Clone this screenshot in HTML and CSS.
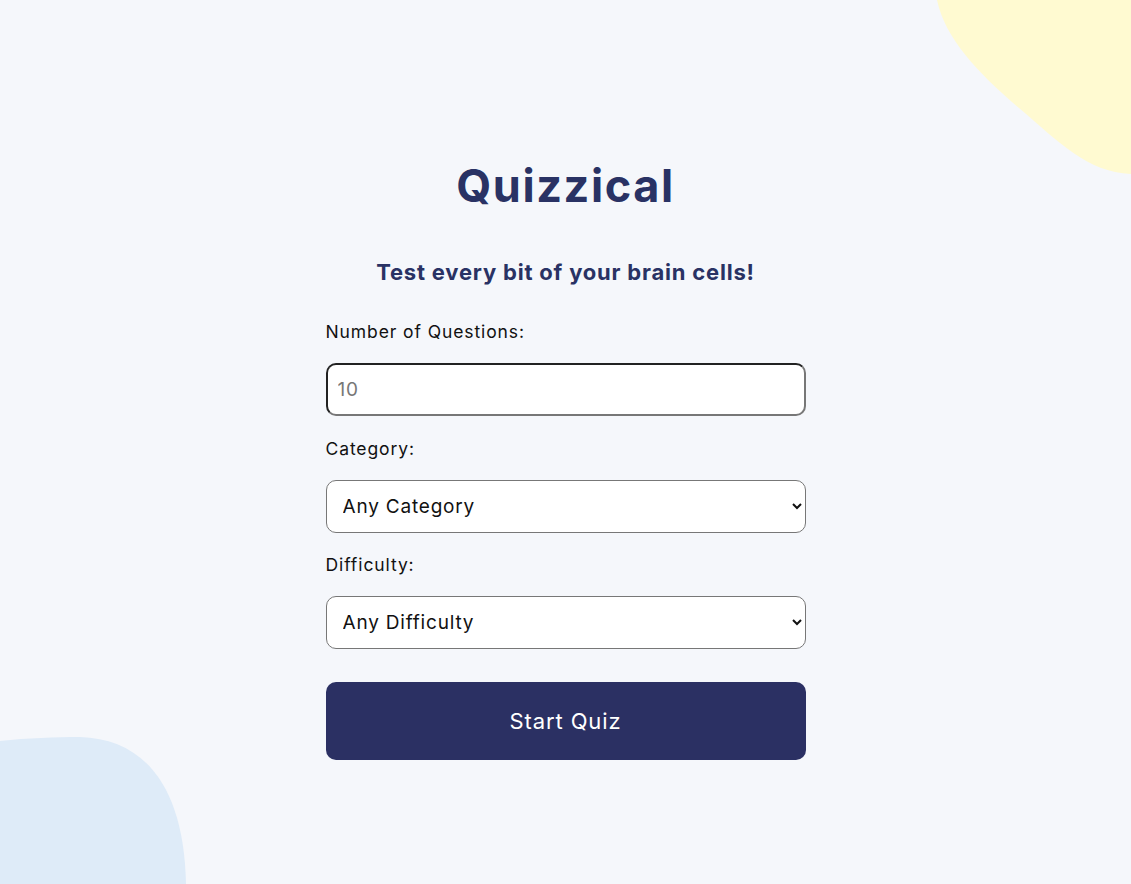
FILE: index.html
```html
<!DOCTYPE html>
<html lang="en">
<head>
    <meta charset="UTF-8">
    <meta name="viewport" content="width=device-width, initial-scale=1.0">
    <title>Quizzical</title>
    <link rel="stylesheet" href="styles.css">
</head>
<body>
    <svg class="blob blob-yellow" width="194" height="175" viewBox="0 0 194 175">
        <path d="M0,0 C8,38 40,72 82,108 C122,142 150,172 194,174 L194,0 Z" fill="#fffad1"/>
    </svg>
    <svg class="blob blob-blue" width="186" height="147" viewBox="0 0 186 147">
        <path d="M0,4 C28,1 55,0 80,0 C145,2 184,50 186,147 L0,147 Z" fill="#deebf8"/>
    </svg>

    <main class="start">
        <h1 class="title">Quizzical</h1>
        <p class="subtitle">Test every bit of your brain cells!</p>

        <form class="setup">
            <label for="amount">Number of Questions:</label>
            <input type="number" id="amount" placeholder="10" min="1" max="50">

            <label for="category">Category:</label>
            <select id="category">
                <option value="">Any Category</option>
                <option value="9">General Knowledge</option>
                <option value="17">Science &amp; Nature</option>
                <option value="23">History</option>
            </select>

            <label for="difficulty">Difficulty:</label>
            <select id="difficulty">
                <option value="">Any Difficulty</option>
                <option value="easy">Easy</option>
                <option value="medium">Medium</option>
                <option value="hard">Hard</option>
            </select>

            <button type="button" class="start-btn">Start Quiz</button>
        </form>
    </main>
</body>
</html>
```

FILE: styles.css
```css
:root {
    --navy: #293264;
    --bg: #f5f7fb;
}
* {
    box-sizing: border-box;
}
body {
    margin: 0;
    min-height: 100vh;
    background: var(--bg);
    font-family: 'Inter', 'Open Sans', sans-serif;
    color: #111;
    overflow: hidden;
}
.blob {
    position: absolute;
}
.blob-yellow {
    top: 0;
    right: 0;
}
.blob-blue {
    left: 0;
    bottom: 0;
}
.start {
    width: 480px;
    margin: 0 auto;
    padding-top: 154px;
    display: flex;
    flex-direction: column;
}
.title {
    margin: 0;
    text-align: center;
    color: var(--navy);
    font-size: 45px;
    line-height: 64px;
    letter-spacing: 1.6px;
    font-weight: 700;
}
.subtitle {
    margin: 40px 0 0;
    text-align: center;
    color: var(--navy);
    font-size: 22px;
    line-height: 28px;
    letter-spacing: 0.8px;
    font-weight: 700;
}
.setup {
    margin-top: 35px;
    display: flex;
    flex-direction: column;
}
label {
    font-size: 17.5px;
    line-height: 22px;
    letter-spacing: 0.9px;
    margin-bottom: 20px;
}
input, select {
    width: 100%;
    height: 53px;
    font-family: inherit;
    font-size: 19px;
    letter-spacing: 0.8px;
    background: #fff;
    border-radius: 10px;
    margin-bottom: 22px;
    color: #111;
}
input {
    padding: 0 10px;
    border: 2px solid;
    border-color: #222 #777 #777 #222;
}
input::placeholder {
    color: #777;
}
select {
    padding: 0 12px;
    border: 1px solid #777;
}
select + label {
    margin-top: -1px;
}
.start-btn {
    margin-top: 11px;
    height: 78px;
    border: none;
    border-radius: 10px;
    background: #2b3063;
    color: #fff;
    font-family: inherit;
    font-size: 22px;
    letter-spacing: 0.9px;
    cursor: pointer;
}
```
